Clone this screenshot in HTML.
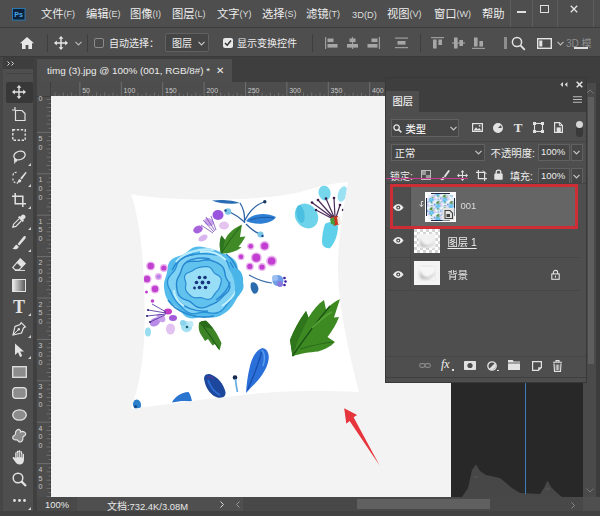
<!DOCTYPE html>
<html><head><meta charset="utf-8">
<style>
*{box-sizing:border-box;margin:0;padding:0}
html,body{width:600px;height:516px;overflow:hidden;background:#4e4e4e}
body{position:relative;font-family:"Liberation Sans","Noto Sans CJK SC",sans-serif;color:#e4e4e4;font-size:12px}
.abs{position:absolute}
svg{position:absolute;overflow:visible}
#menubar{left:0;top:0;width:600px;height:28px;background:#4e4e4e;border-bottom:1px solid #3c3c3c}
#menubar span.m{position:absolute;top:5px;font-size:11.3px;color:#ededed;white-space:nowrap}
#menubar span.m i{font-style:normal;font-size:9px;color:#dcdcdc;position:relative;top:-1px}
#optbar{left:0;top:28px;width:600px;height:29px;background:#4e4e4e;border-bottom:1px solid #3a3a3a}
#optbar .t{position:absolute;font-size:12px;color:#ededed;white-space:nowrap;top:6px}
.vsep{position:absolute;width:1px;background:#3e3e3e;top:6px;height:18px}
#tabbar{left:37px;top:57px;width:563px;height:26px;background:#3e3e3e}
#tab{left:37px;top:59px;width:195px;height:24px;background:#4e4e4e;color:#ececec;font-size:9.9px;line-height:24px;padding-left:10px;white-space:nowrap}
#toolbar{left:0;top:57px;width:37px;height:459px;background:#4e4e4e;border-right:4px solid #404040;border-left:3px solid #464646}
#tbhead{left:3px;top:57px;width:30px;height:12px;background:#3e3e3e}
#hruler{left:37px;top:83px;width:415px;height:14px;background:#4d4d4d}
#vruler{left:37px;top:96px;width:14px;height:401px;background:#4d4d4d}
.rl{position:absolute;font-size:8.5px;color:#bdbdbd;line-height:8px}
#canvas{left:51px;top:96px;width:400px;height:401px;background:#f3f3f3;overflow:hidden}
#dark{left:451px;top:96px;width:132px;height:401px;background:#282828}
#status{left:37px;top:497px;width:563px;height:19px;background:#4f4f4f}
#status .t{position:absolute;top:1px;font-size:11px;color:#e8e8e8;white-space:nowrap}
#dock{left:583px;top:83px;width:17px;height:414px;background:#4a4a4a}
#panel{left:385px;top:77px;width:202px;height:306px;background:#4e4e4e;border:1px solid #383838}
#panel .t{position:absolute;font-size:12px;color:#ececec;white-space:nowrap}
.dd{position:absolute;background:#464646;border:1px solid #616161}
</style></head><body>
<div id="menubar" class="abs">
<svg style="left:12px;top:7.5px" width="13.5" height="12.5" viewBox="0 0 15 14"><rect x="0.5" y="0.5" width="14" height="13" fill="#0c2238" stroke="#2b7fc0" stroke-width="1"/><text x="2.6" y="10.3" font-family="Liberation Sans,sans-serif" font-weight="bold" font-size="8" fill="#4aa8ee">Ps</text></svg>
<span class="m" style="left:41px">文件<i>(F)</i></span>
<span class="m" style="left:86px">编辑<i>(E)</i></span>
<span class="m" style="left:130px">图像<i>(I)</i></span>
<span class="m" style="left:172px">图层<i>(L)</i></span>
<span class="m" style="left:217px">文字<i>(Y)</i></span>
<span class="m" style="left:262px">选择<i>(S)</i></span>
<span class="m" style="left:306px">滤镜<i>(T)</i></span>
<span class="m" style="left:352px"><i style="font-size:9.3px;top:2.5px">3D(D)</i></span>
<span class="m" style="left:387px">视图<i>(V)</i></span>
<span class="m" style="left:434px">窗口<i>(W)</i></span>
<span class="m" style="left:482px">帮助</span>
<div class="abs" style="left:510px;top:0;width:1px;height:27px;background:#5c5c5c"></div>
<div class="abs" style="left:532px;top:0;width:1px;height:27px;background:#5c5c5c"></div>
<div class="abs" style="left:557px;top:0;width:1px;height:27px;background:#5c5c5c"></div>
<div class="abs" style="left:593px;top:0;width:1px;height:27px;background:#5c5c5c"></div>
<div class="abs" style="left:516.5px;top:10.5px;width:9px;height:2px;background:#e0e0e0"></div>
<div class="abs" style="left:540px;top:5px;width:9px;height:8px;border:1.5px solid #e0e0e0"></div>
<svg style="left:570px;top:4.5px" width="8" height="8" viewBox="0 0 10 10"><path d="M1 1L9 9M9 1L1 9" stroke="#e6e6e6" stroke-width="1.6" fill="none"/></svg>

</div>
<div id="optbar" class="abs">
<svg style="left:20px;top:9px" width="14" height="12" viewBox="0 0 14 12"><path d="M7 0L0 6.2H2V12H5.6V8H8.4V12H12V6.2H14Z" fill="#e8e8e8"/></svg>
<div class="vsep" style="left:47px"></div>
<svg style="left:54px;top:8px" width="14" height="14" viewBox="0 0 14 14"><path d="M7 0L4.6 2.8H6.3V6.3H2.8V4.6L0 7L2.8 9.4V7.7H6.3V11.2H4.6L7 14L9.4 11.2H7.7V7.7H11.2V9.4L14 7L11.2 4.6V6.3H7.7V2.8H9.4Z" fill="#e8e8e8"/></svg>
<svg style="left:75px;top:13px" width="7" height="5" viewBox="0 0 7 5"><path d="M0.5 0.8L3.5 3.8L6.5 0.8" stroke="#b8b8b8" stroke-width="1.2" fill="none"/></svg>
<div class="vsep" style="left:87px"></div>
<div class="abs" style="left:94px;top:10px;width:10px;height:10px;border:1px solid #8a8a8a;border-radius:2px;background:#4a4a4a"></div>
<span class="t" style="left:109px;font-size:10px;top:7px">自动选择：</span>
<div class="abs" style="left:165px;top:5px;width:44px;height:19px;background:#454545;border:1px solid #616161;border-radius:2px"></div>
<span class="t" style="left:172px;font-size:10px;top:7px">图层</span>
<svg style="left:198px;top:13px" width="7" height="5" viewBox="0 0 7 5"><path d="M0.5 0.8L3.5 3.8L6.5 0.8" stroke="#c8c8c8" stroke-width="1.2" fill="none"/></svg>
<div class="abs" style="left:223px;top:10px;width:10px;height:10px;border-radius:2px;background:#e8e8e8"></div>
<svg style="left:224px;top:11px" width="8" height="8" viewBox="0 0 8 8"><path d="M1 4L3.2 6.2L7 1.5" stroke="#333" stroke-width="1.5" fill="none"/></svg>
<span class="t" style="left:237px;font-size:10px;top:7px">显示变换控件</span>
<div class="vsep" style="left:312px"></div>
<g>
<svg style="left:325px;top:9px" width="13" height="12" viewBox="0 0 13 12"><rect x="0" y="0" width="1.2" height="12" fill="#9c9c9c"/><rect x="2.5" y="1.5" width="6" height="3.6" fill="#a6a6a6"/><rect x="2.5" y="7" width="10" height="3.6" fill="#a6a6a6"/></svg>
<svg style="left:346px;top:9px" width="13" height="12" viewBox="0 0 13 12"><rect x="5.9" y="0" width="1.2" height="12" fill="#9c9c9c"/><rect x="3.5" y="1.5" width="6" height="3.6" fill="#a6a6a6"/><rect x="1" y="7" width="11" height="3.6" fill="#a6a6a6"/></svg>
<svg style="left:367px;top:9px" width="13" height="12" viewBox="0 0 13 12"><rect x="11.8" y="0" width="1.2" height="12" fill="#9c9c9c"/><rect x="4.5" y="1.5" width="6" height="3.6" fill="#a6a6a6"/><rect x="0.5" y="7" width="10" height="3.6" fill="#a6a6a6"/></svg>
<svg style="left:395px;top:9px" width="13" height="12" viewBox="0 0 13 12"><rect x="0" y="0.5" width="13" height="1.2" fill="#9c9c9c"/><rect x="2.5" y="4" width="8" height="3.6" fill="#a6a6a6"/><rect x="0" y="10" width="13" height="1.2" fill="#9c9c9c"/></svg>
<div class="vsep" style="left:420px"></div>
<svg style="left:431px;top:9px" width="13" height="12" viewBox="0 0 13 12"><rect x="0" y="0" width="13" height="1.2" fill="#9c9c9c"/><rect x="2" y="2.5" width="3.6" height="9" fill="#a6a6a6"/><rect x="7.4" y="2.5" width="3.6" height="5.5" fill="#a6a6a6"/></svg>
<svg style="left:452px;top:9px" width="13" height="12" viewBox="0 0 13 12"><rect x="0" y="5.4" width="13" height="1.2" fill="#9c9c9c"/><rect x="2" y="0.5" width="3.6" height="11" fill="#a6a6a6"/><rect x="7.4" y="3" width="3.6" height="6" fill="#a6a6a6"/></svg>
<svg style="left:472px;top:9px" width="13" height="12" viewBox="0 0 13 12"><rect x="0" y="10.8" width="13" height="1.2" fill="#9c9c9c"/><rect x="2" y="0.5" width="3.6" height="9" fill="#a6a6a6"/><rect x="7.4" y="4" width="3.6" height="5.5" fill="#a6a6a6"/></svg>
</g>
<div class="abs" style="left:504px;top:9px;width:3px;height:12px;background:#8d8d8d"></div>
<svg style="left:511px;top:8px" width="15" height="15" viewBox="0 0 15 15"><circle cx="6" cy="6" r="4.6" stroke="#e4e4e4" stroke-width="1.5" fill="none"/><path d="M9.4 9.4L13.8 13.8" stroke="#e4e4e4" stroke-width="1.9"/></svg>
<svg style="left:537px;top:10px" width="15" height="11" viewBox="0 0 15 11"><rect x="0.7" y="0.7" width="13.6" height="9.6" stroke="#e4e4e4" stroke-width="1.4" fill="none"/><rect x="2.3" y="2.5" width="3" height="6" fill="#e4e4e4"/></svg>
<svg style="left:557px;top:13px" width="7" height="5" viewBox="0 0 7 5"><path d="M0.5 0.8L3.5 3.8L6.5 0.8" stroke="#b8b8b8" stroke-width="1.2" fill="none"/></svg>
<span class="t" style="left:566px;top:7px;font-size:10px;color:#8c8c8c">3D 模</span>
<div class="abs" style="left:574px;top:19px;width:14px;height:2px;background:#e0e0e0"></div>

</div>
<div id="tabbar" class="abs"></div>
<div id="tab" class="abs">timg (3).jpg @ 100% (001, RGB/8#) * <span style="margin-left:3px;font-size:10px">✕</span></div>
<div id="toolbar" class="abs"></div>
<div id="tbhead" class="abs"></div>
<div class="abs" style="left:6px;top:82px;width:27px;height:21px;background:#383838;border-radius:2px"></div>
<svg style="left:7px;top:61px" width="8" height="5" viewBox="0 0 8 5"><path d="M0.5 0.5L2.5 2.5L0.5 4.5M4.5 0.5L6.5 2.5L4.5 4.5" stroke="#ddd" stroke-width="1" fill="none"/></svg>
<div class="abs" style="left:6px;top:73px;width:27px;height:1px;background:#444"></div>
<svg style="left:12.0px;top:85.0px" width="14" height="14" viewBox="0 0 14 14"><path d="M7 0L4.6 2.8H6.3V6.3H2.8V4.6L0 7L2.8 9.4V7.7H6.3V11.2H4.6L7 14L9.4 11.2H7.7V7.7H11.2V9.4L14 7L11.2 4.6V6.3H7.7V2.8H9.4Z" fill="#e2e2e2"/></svg>
<svg style="left:12.0px;top:106.5px" width="14" height="14" viewBox="0 0 14 14"><path d="M3 0V3H0M3.5 3.5H10L13 6.5V13.5H3.5Z" stroke="#e2e2e2" stroke-width="1.2" fill="none"/></svg>
<svg style="left:12.0px;top:129.0px" width="14" height="12" viewBox="0 0 14 12"><rect x="0.8" y="0.8" width="12.4" height="10.4" stroke="#e2e2e2" stroke-width="1.4" fill="none" stroke-dasharray="2.4 1.6"/></svg>
<svg style="left:12.0px;top:149.5px" width="14" height="14" viewBox="0 0 14 14"><ellipse cx="7.5" cy="5.5" rx="5.8" ry="4.2" transform="rotate(-18 7.5 5.5)" stroke="#e2e2e2" stroke-width="1.3" fill="none"/><path d="M3.5 8.5C2 9.5 2 11.5 3.8 11.5C5 11.5 4.8 9.8 3.6 9.9C2.5 10.5 2.5 12.5 3 13.5" stroke="#e2e2e2" stroke-width="1.1" fill="none"/></svg>
<svg style="left:11.5px;top:171.0px" width="15" height="14" viewBox="0 0 15 14"><path d="M1 4.5C1 2 3 1 5 1.5M1 7.5C0.5 10.5 3 12.5 6 12" stroke="#e2e2e2" stroke-width="1.2" fill="none" stroke-dasharray="2 1.3"/><path d="M13.8 0.8L8.2 7.2L9.8 8.6L14.6 1.8Z" fill="#e2e2e2"/><path d="M7.6 7.9C5.8 8.6 6.4 10.6 4.8 11.6C7 12 9.4 11 9.4 9.4Z" fill="#e2e2e2"/></svg>
<svg style="left:12.0px;top:192.5px" width="14" height="14" viewBox="0 0 14 14"><path d="M3.2 0V10.8H14M0 3.2H10.8V14" stroke="#e2e2e2" stroke-width="1.5" fill="none"/></svg>
<svg style="left:12.0px;top:214.0px" width="14" height="14" viewBox="0 0 14 14"><path d="M12.8 1.2C11.6 0 10.2 0.4 9.4 1.4L8.2 2.8L7.2 2L6 3.4L10.6 8L12 6.8L11.2 5.8L12.6 4.6C13.6 3.8 14 2.4 12.8 1.2Z" fill="#e2e2e2"/><path d="M7 4.8L1.6 10.2L0.8 13.2L3.8 12.4L9.2 7" stroke="#e2e2e2" stroke-width="1.2" fill="none"/></svg>
<svg style="left:12.0px;top:235.5px" width="14" height="14" viewBox="0 0 14 14"><path d="M13.4 0.3C12.6 -0.2 11.8 0.2 11.2 1L5.6 8L7.4 9.6L13.4 2.4C14 1.6 14 0.8 13.4 0.3Z" fill="#e2e2e2"/><path d="M4.8 8.8C2.6 9 2.8 11.4 0.4 12.8C3.4 14 6.8 12.6 6.6 10.4Z" fill="#e2e2e2"/></svg>
<svg style="left:12.0px;top:257.5px" width="14" height="13" viewBox="0 0 14 13"><path d="M8.2 0.8L13.2 5.4L7 11.8H3.2L0.8 9.4Z" stroke="#e2e2e2" stroke-width="1.2" fill="none"/><path d="M8.2 0.8L13.2 5.4L9.4 9.3L4.5 4.6Z" fill="#e2e2e2"/><path d="M3 12.4H13" stroke="#e2e2e2" stroke-width="1"/></svg>
<svg style="left:12px;top:279.0px" width="14" height="13" viewBox="0 0 14 13"><defs><linearGradient id="gr" x1="0" x2="1"><stop offset="0" stop-color="#efefef"/><stop offset="1" stop-color="#555"/></linearGradient></defs><rect x="0.5" y="0.5" width="13" height="12" fill="url(#gr)" stroke="#e2e2e2" stroke-width="1"/></svg>
<div class="abs" style="left:11px;top:297.0px;width:16px;height:20px;font-family:'Liberation Serif',serif;font-weight:bold;font-size:18px;line-height:20px;text-align:center;color:#e2e2e2">T</div>
<svg style="left:12.0px;top:321.5px" width="14" height="14" viewBox="0 0 14 14"><path d="M9.2 0.6L13.4 4.8L11.4 6L9.6 11L1 13L3 4.4L8 2.6Z" stroke="#e2e2e2" stroke-width="1.2" fill="none"/><path d="M1.2 12.8L6.2 7.8" stroke="#e2e2e2" stroke-width="1"/><circle cx="6.8" cy="7.2" r="1.2" fill="#e2e2e2"/></svg>
<svg style="left:13.5px;top:342.5px" width="11" height="15" viewBox="0 0 11 15"><path d="M1 0.5V12L4 9.2L6 14L8.2 13L6.2 8.4H10Z" fill="#e2e2e2"/></svg>
<svg style="left:11.5px;top:365.5px" width="15" height="12" viewBox="0 0 15 12"><rect x="0.7" y="0.7" width="13.6" height="10.6" fill="#8c8c8c" stroke="#e2e2e2" stroke-width="1.3"/></svg>
<svg style="left:11.5px;top:387.0px" width="15" height="12" viewBox="0 0 15 12"><rect x="0.7" y="0.7" width="13.6" height="10.6" rx="3" fill="#8c8c8c" stroke="#e2e2e2" stroke-width="1.3"/></svg>
<svg style="left:11.5px;top:408.5px" width="15" height="12" viewBox="0 0 15 12"><ellipse cx="7.5" cy="6" rx="6.8" ry="5.2" fill="#8c8c8c" stroke="#e2e2e2" stroke-width="1.3"/></svg>
<svg style="left:11.5px;top:429.0px" width="15" height="14" viewBox="0 0 15 14"><path d="M5 1C7 -0.5 9 1 8.6 3C11 1.6 14.4 3.4 13.6 5.6C13 7.4 10.6 7 10.8 8.6C11.4 11 9.6 13.4 7.4 12.8C5.8 12.4 6 10.6 4.6 10.8C2.4 11.4 0.4 10 0.8 8C1.2 6.4 3.4 6.6 3.4 5C3.2 3.4 3.6 2 5 1Z" fill="#8c8c8c" stroke="#e2e2e2" stroke-width="1.2"/></svg>
<svg style="left:12.0px;top:450.0px" width="14" height="15" viewBox="0 0 14 15"><path d="M3.2 8V3.2C3.2 2 4.8 2 4.8 3.2V1.8C4.8 0.4 6.6 0.4 6.6 1.8V1.2C6.6 0 8.4 0 8.4 1.4V2.2C8.4 1 10.2 1 10.2 2.4V4.4C10.2 3.4 12 3.4 12 4.6V9.6C12 12.6 10.4 14.6 7.6 14.6C5.4 14.6 4.4 13.6 3 11.6L0.8 8.4C0.2 7.2 1.6 6.4 2.4 7.4Z" fill="#e2e2e2"/><path d="M4.9 3V7.5M6.7 2V7.2M8.5 2.2V7.2M10.2 4V7.6" stroke="#4e4e4e" stroke-width="0.7"/></svg>
<svg style="left:11.5px;top:471.5px" width="15" height="15" viewBox="0 0 15 15"><circle cx="6" cy="6" r="4.8" stroke="#e2e2e2" stroke-width="1.5" fill="none"/><path d="M9.4 9.4L14 14" stroke="#e2e2e2" stroke-width="2.2"/></svg>
<svg style="left:12.5px;top:499.0px" width="13" height="3" viewBox="0 0 13 3"><circle cx="1.5" cy="1.5" r="1.4" fill="#e2e2e2"/><circle cx="6.5" cy="1.5" r="1.4" fill="#e2e2e2"/><circle cx="11.5" cy="1.5" r="1.4" fill="#e2e2e2"/></svg>
<svg style="left:28px;top:162.5px" width="3" height="3" viewBox="0 0 3 3"><path d="M3 0V3H0Z" fill="#cfcfcf"/></svg>
<svg style="left:28px;top:184.0px" width="3" height="3" viewBox="0 0 3 3"><path d="M3 0V3H0Z" fill="#cfcfcf"/></svg>
<svg style="left:28px;top:205.5px" width="3" height="3" viewBox="0 0 3 3"><path d="M3 0V3H0Z" fill="#cfcfcf"/></svg>
<svg style="left:28px;top:227.0px" width="3" height="3" viewBox="0 0 3 3"><path d="M3 0V3H0Z" fill="#cfcfcf"/></svg>
<svg style="left:28px;top:248.5px" width="3" height="3" viewBox="0 0 3 3"><path d="M3 0V3H0Z" fill="#cfcfcf"/></svg>
<svg style="left:28px;top:313.0px" width="3" height="3" viewBox="0 0 3 3"><path d="M3 0V3H0Z" fill="#cfcfcf"/></svg>
<svg style="left:28px;top:334.5px" width="3" height="3" viewBox="0 0 3 3"><path d="M3 0V3H0Z" fill="#cfcfcf"/></svg>
<svg style="left:28px;top:356.0px" width="3" height="3" viewBox="0 0 3 3"><path d="M3 0V3H0Z" fill="#cfcfcf"/></svg>
<svg style="left:28px;top:506.5px" width="3" height="3" viewBox="0 0 3 3"><path d="M3 0V3H0Z" fill="#cfcfcf"/></svg>

<div id="hruler" class="abs"></div>
<div id="vruler" class="abs"></div>
<svg style="left:37px;top:82px" width="415" height="15" viewBox="37 82 415 15"><rect x="37" y="82" width="415" height="15" fill="#4d4d4d"/><path d="M37 96.500H452" stroke="#3e3e3e" stroke-width="1"/><path d="M50.500 82V97" stroke="#3e3e3e" stroke-width="1"/><path d="M55.1 92.500V97M59.2 94.500V97M63.3 92.500V97M67.5 94.500V97M71.6 92.500V97M75.8 94.500V97M79.9 82V97M84.0 94.500V97M88.2 92.500V97M92.3 94.500V97M96.5 92.500V97M100.6 94.500V97M104.7 92.500V97M108.9 94.500V97M113.0 92.500V97M117.2 94.500V97M121.3 82V97M125.4 94.500V97M129.6 92.500V97M133.7 94.500V97M137.9 92.500V97M142.0 94.500V97M146.1 92.500V97M150.3 94.500V97M154.4 92.500V97M158.6 94.500V97M162.7 82V97M166.8 94.500V97M171.0 92.500V97M175.1 94.500V97M179.3 92.500V97M183.4 94.500V97M187.5 92.500V97M191.7 94.500V97M195.8 92.500V97M200.0 94.500V97M204.1 82V97M208.2 94.500V97M212.4 92.500V97M216.5 94.500V97M220.7 92.500V97M224.8 94.500V97M228.9 92.500V97M233.1 94.500V97M237.2 92.500V97M241.4 94.500V97M245.5 82V97M249.6 94.500V97M253.8 92.500V97M257.9 94.500V97M262.1 92.500V97M266.2 94.500V97M270.3 92.500V97M274.5 94.500V97M278.6 92.500V97M282.8 94.500V97M286.9 82V97M291.0 94.500V97M295.2 92.500V97M299.3 94.500V97M303.5 92.500V97M307.6 94.500V97M311.7 92.500V97M315.9 94.500V97M320.0 92.500V97M324.2 94.500V97M328.3 82V97M332.4 94.500V97M336.6 92.500V97M340.7 94.500V97M344.9 92.500V97M349.0 94.500V97M353.1 92.500V97M357.3 94.500V97M361.4 92.500V97M365.6 94.500V97M369.7 82V97M373.8 94.500V97M378.0 92.500V97M382.1 94.500V97M386.3 92.500V97M390.4 94.500V97M394.5 92.500V97M398.7 94.500V97M402.8 92.500V97M407.0 94.500V97M411.1 82V97M415.2 94.500V97M419.4 92.500V97M423.5 94.500V97M427.7 92.500V97M431.8 94.500V97M435.9 92.500V97M440.1 94.500V97M444.2 92.500V97M448.4 94.500V97" stroke="#777" stroke-width="0.8" fill="none"/><text x="82.2" y="92.800" font-size="7" fill="#c8c8c8" font-family="Liberation Sans,sans-serif">50</text><text x="123.6" y="92.800" font-size="7" fill="#c8c8c8" font-family="Liberation Sans,sans-serif">100</text><text x="165.0" y="92.800" font-size="7" fill="#c8c8c8" font-family="Liberation Sans,sans-serif">150</text><text x="206.4" y="92.800" font-size="7" fill="#c8c8c8" font-family="Liberation Sans,sans-serif">200</text><text x="247.8" y="92.800" font-size="7" fill="#c8c8c8" font-family="Liberation Sans,sans-serif">250</text><text x="289.2" y="92.800" font-size="7" fill="#c8c8c8" font-family="Liberation Sans,sans-serif">300</text><text x="330.6" y="92.800" font-size="7" fill="#c8c8c8" font-family="Liberation Sans,sans-serif">350</text><text x="372.0" y="92.800" font-size="7" fill="#c8c8c8" font-family="Liberation Sans,sans-serif">400</text><text x="413.4" y="92.800" font-size="7" fill="#c8c8c8" font-family="Liberation Sans,sans-serif">450</text></svg>
<svg style="left:37px;top:97px" width="14" height="400" viewBox="37 97 14 400"><path d="M50.500 97V497" stroke="#3e3e3e" stroke-width="1"/><path d="M46.500 99.3H51M48.500 103.4H51M46.500 107.6H51M48.500 111.7H51M46.500 115.8H51M48.500 120.0H51M46.500 124.1H51M48.500 128.3H51M37 132.4H51M48.500 136.5H51M46.500 140.7H51M48.500 144.8H51M46.500 149.0H51M48.500 153.1H51M46.500 157.2H51M48.500 161.4H51M46.500 165.5H51M48.500 169.7H51M37 173.8H51M48.500 177.9H51M46.500 182.1H51M48.500 186.2H51M46.500 190.4H51M48.500 194.5H51M46.500 198.6H51M48.500 202.8H51M46.500 206.9H51M48.500 211.1H51M37 215.2H51M48.500 219.3H51M46.500 223.5H51M48.500 227.6H51M46.500 231.8H51M48.500 235.9H51M46.500 240.0H51M48.500 244.2H51M46.500 248.3H51M48.500 252.5H51M37 256.6H51M48.500 260.7H51M46.500 264.9H51M48.500 269.0H51M46.500 273.2H51M48.500 277.3H51M46.500 281.4H51M48.500 285.6H51M46.500 289.7H51M48.500 293.9H51M37 298.0H51M48.500 302.1H51M46.500 306.3H51M48.500 310.4H51M46.500 314.6H51M48.500 318.7H51M46.500 322.8H51M48.500 327.0H51M46.500 331.1H51M48.500 335.3H51M37 339.4H51M48.500 343.5H51M46.500 347.7H51M48.500 351.8H51M46.500 356.0H51M48.500 360.1H51M46.500 364.2H51M48.500 368.4H51M46.500 372.5H51M48.500 376.7H51M37 380.8H51M48.500 384.9H51M46.500 389.1H51M48.500 393.2H51M46.500 397.4H51M48.500 401.5H51M46.500 405.6H51M48.500 409.8H51M46.500 413.9H51M48.500 418.1H51M37 422.2H51M48.500 426.3H51M46.500 430.5H51M48.500 434.6H51M46.500 438.8H51M48.500 442.9H51M46.500 447.0H51M48.500 451.2H51M46.500 455.3H51M48.500 459.5H51M37 463.6H51M48.500 467.7H51M46.500 471.9H51M48.500 476.0H51M46.500 480.2H51M48.500 484.3H51M46.500 488.4H51M48.500 492.6H51M46.500 496.7H51" stroke="#777" stroke-width="0.8" fill="none"/><text x="38.500" y="101.0" font-size="7" fill="#c8c8c8" font-family="Liberation Sans,sans-serif">0</text><text x="38.500" y="140.9" font-size="7" fill="#c8c8c8" font-family="Liberation Sans,sans-serif">5</text><text x="38.500" y="149.5" font-size="7" fill="#c8c8c8" font-family="Liberation Sans,sans-serif">0</text><text x="38.500" y="182.3" font-size="7" fill="#c8c8c8" font-family="Liberation Sans,sans-serif">1</text><text x="38.500" y="190.9" font-size="7" fill="#c8c8c8" font-family="Liberation Sans,sans-serif">0</text><text x="38.500" y="199.5" font-size="7" fill="#c8c8c8" font-family="Liberation Sans,sans-serif">0</text><text x="38.500" y="223.7" font-size="7" fill="#c8c8c8" font-family="Liberation Sans,sans-serif">1</text><text x="38.500" y="232.3" font-size="7" fill="#c8c8c8" font-family="Liberation Sans,sans-serif">5</text><text x="38.500" y="240.9" font-size="7" fill="#c8c8c8" font-family="Liberation Sans,sans-serif">0</text><text x="38.500" y="265.1" font-size="7" fill="#c8c8c8" font-family="Liberation Sans,sans-serif">2</text><text x="38.500" y="273.7" font-size="7" fill="#c8c8c8" font-family="Liberation Sans,sans-serif">0</text><text x="38.500" y="282.3" font-size="7" fill="#c8c8c8" font-family="Liberation Sans,sans-serif">0</text><text x="38.500" y="306.5" font-size="7" fill="#c8c8c8" font-family="Liberation Sans,sans-serif">2</text><text x="38.500" y="315.1" font-size="7" fill="#c8c8c8" font-family="Liberation Sans,sans-serif">5</text><text x="38.500" y="323.7" font-size="7" fill="#c8c8c8" font-family="Liberation Sans,sans-serif">0</text><text x="38.500" y="347.9" font-size="7" fill="#c8c8c8" font-family="Liberation Sans,sans-serif">3</text><text x="38.500" y="356.5" font-size="7" fill="#c8c8c8" font-family="Liberation Sans,sans-serif">0</text><text x="38.500" y="365.1" font-size="7" fill="#c8c8c8" font-family="Liberation Sans,sans-serif">0</text><text x="38.500" y="389.3" font-size="7" fill="#c8c8c8" font-family="Liberation Sans,sans-serif">3</text><text x="38.500" y="397.9" font-size="7" fill="#c8c8c8" font-family="Liberation Sans,sans-serif">5</text><text x="38.500" y="406.5" font-size="7" fill="#c8c8c8" font-family="Liberation Sans,sans-serif">0</text><text x="38.500" y="430.7" font-size="7" fill="#c8c8c8" font-family="Liberation Sans,sans-serif">4</text><text x="38.500" y="439.3" font-size="7" fill="#c8c8c8" font-family="Liberation Sans,sans-serif">0</text><text x="38.500" y="447.9" font-size="7" fill="#c8c8c8" font-family="Liberation Sans,sans-serif">0</text><text x="38.500" y="472.1" font-size="7" fill="#c8c8c8" font-family="Liberation Sans,sans-serif">4</text><text x="38.500" y="480.7" font-size="7" fill="#c8c8c8" font-family="Liberation Sans,sans-serif">5</text><text x="38.500" y="489.3" font-size="7" fill="#c8c8c8" font-family="Liberation Sans,sans-serif">0</text></svg>
<div id="canvas" class="abs">
<svg style="left:0;top:0" width="401" height="401" viewBox="51 96 401 401">
<defs>
<filter id="sf" x="-10%" y="-10%" width="120%" height="120%"><feGaussianBlur stdDeviation="0.7"/></filter>
<filter id="sf2" x="-20%" y="-20%" width="140%" height="140%"><feGaussianBlur stdDeviation="1.6"/></filter>
<clipPath id="pc"><path id="pillowp" d="M131 194C150 198 180 199.500 212 199.500C245 199.500 285 197 305 190.500C320 186 335 183 348 182C342 215 336 250 338.500 284C340 310 348 350 359 392C330 390.500 300 391 286 391.500C250 393 190 401 131 409C142 380 146 340 144.500 300C144 260 140 220 131 194Z"/></clipPath>
</defs>
<path d="M131 194C150 198 180 199.500 212 199.500C245 199.500 285 197 305 190.500C320 186 335 183 348 182C342 215 336 250 338.500 284C340 310 348 350 359 392C330 390.500 300 391 286 391.500C250 393 190 401 131 409C142 380 146 340 144.500 300C144 260 140 220 131 194Z" fill="#ffffff"/>
<g clip-path="url(#pc)" filter="url(#sf)">
<g id="floral">
<!-- big blue flower -->
<path d="M243.2 283.0 L243.7 286.2 L243.0 289.4 L241.3 292.3 L239.3 295.0 L237.4 297.6 L235.7 300.2 L234.2 302.9 L232.6 305.6 L230.6 308.1 L228.2 310.4 L225.6 312.4 L222.9 314.3 L219.9 316.0 L216.7 317.1 L213.2 317.6 L209.7 317.5 L206.3 317.1 L203.0 316.9 L199.7 317.2 L196.2 317.9 L192.6 318.4 L189.0 318.1 L185.8 316.7 L183.1 314.3 L181.0 311.6 L178.9 309.1 L176.6 307.0 L174.0 305.2 L171.2 303.3 L168.7 301.0 L166.8 298.4 L165.5 295.4 L164.7 292.3 L164.2 289.2 L163.9 286.1 L164.1 283.0 L164.7 280.0 L165.7 277.0 L166.6 274.1 L167.2 271.1 L167.6 268.0 L168.2 264.7 L169.5 261.7 L171.8 259.2 L174.9 257.4 L178.3 256.3 L181.6 255.2 L184.5 253.8 L187.1 251.9 L189.7 249.7 L192.6 247.8 L196.0 246.7 L199.5 246.5 L203.0 246.9 L206.4 247.7 L209.7 248.5 L212.9 249.3 L216.1 250.2 L219.2 251.4 L222.2 252.8 L225.1 254.2 L228.2 255.7 L231.2 257.3 L234.0 259.3 L236.1 261.9 L237.3 265.0 L237.8 268.2 L238.1 271.4 L238.7 274.3 L240.1 277.1 L241.8 279.9Z" fill="#55bcec" stroke-linejoin="round"/>
<path d="M238.2 283.5 L237.4 286.2 L236.4 288.8 L235.3 291.3 L234.3 293.7 L233.2 296.1 L231.8 298.4 L230.2 300.6 L228.5 302.7 L226.7 304.8 L225.0 307.0 L223.0 309.2 L220.8 311.1 L218.1 312.5 L215.0 313.2 L211.8 313.1 L208.7 312.7 L205.8 312.2 L203.0 312.2 L200.2 312.6 L197.2 313.2 L194.0 313.6 L190.9 313.4 L188.0 312.4 L185.4 310.8 L183.2 308.8 L181.2 306.8 L179.3 304.7 L177.5 302.7 L175.7 300.7 L174.2 298.4 L172.9 296.1 L171.7 293.7 L170.6 291.3 L169.4 288.8 L168.2 286.2 L167.5 283.5 L167.5 280.7 L168.4 278.0 L170.0 275.6 L172.0 273.4 L173.9 271.3 L175.3 269.1 L176.3 266.7 L177.2 264.1 L178.4 261.4 L180.2 259.1 L182.6 257.3 L185.4 256.2 L188.4 255.5 L191.4 255.0 L194.3 254.5 L197.2 254.0 L200.1 253.7 L203.0 253.6 L205.9 253.8 L208.8 254.1 L211.7 254.4 L214.7 254.7 L217.8 255.1 L220.8 255.9 L223.5 257.3 L225.6 259.3 L227.2 261.8 L228.3 264.5 L229.3 267.0 L230.7 269.1 L232.5 271.1 L234.6 273.2 L236.6 275.4 L237.9 278.0 L238.5 280.7Z" fill="#7fd2f4" stroke="#2c92d8" stroke-width="1.400" stroke-linejoin="round"/>
<path d="M229.0 283.0 L229.7 285.2 L229.9 287.4 L229.2 289.5 L228.0 291.4 L226.5 293.1 L224.8 294.6 L223.2 296.1 L221.8 297.6 L220.3 299.1 L218.8 300.5 L217.1 301.8 L215.2 302.9 L213.3 303.8 L211.3 304.7 L209.2 305.6 L207.1 306.6 L204.9 307.4 L202.5 307.9 L200.1 307.9 L197.8 307.3 L195.6 306.1 L193.8 304.7 L192.1 303.2 L190.4 301.9 L188.6 300.9 L186.6 300.1 L184.4 299.3 L182.3 298.3 L180.4 297.0 L178.9 295.3 L177.9 293.4 L177.3 291.3 L176.9 289.2 L176.6 287.1 L176.5 285.1 L176.5 283.0 L176.8 281.0 L177.4 279.0 L178.3 277.1 L179.2 275.3 L180.1 273.6 L180.9 271.7 L181.5 269.7 L182.2 267.6 L183.2 265.5 L184.6 263.7 L186.5 262.4 L188.8 261.6 L191.3 261.3 L193.8 261.3 L196.1 261.4 L198.3 261.2 L200.4 260.9 L202.5 260.4 L204.7 260.0 L207.0 259.8 L209.3 260.0 L211.5 260.5 L213.7 261.3 L215.8 262.2 L217.8 263.2 L219.8 264.4 L221.6 265.8 L223.0 267.4 L224.0 269.4 L224.6 271.5 L225.0 273.5 L225.3 275.5 L225.9 277.3 L226.8 279.1 L227.9 281.0Z" fill="#62c2ee" stroke="#2786cf" stroke-width="1.400" stroke-linejoin="round"/>
<path d="M220.9 283.0 L220.5 284.4 L220.1 285.8 L219.6 287.1 L219.1 288.4 L218.4 289.6 L217.5 290.7 L216.5 291.7 L215.6 292.8 L214.7 293.9 L213.9 295.1 L213.1 296.4 L212.1 297.7 L210.7 298.7 L209.2 299.3 L207.4 299.4 L205.7 299.0 L204.0 298.5 L202.5 298.0 L201.1 297.7 L199.6 297.6 L198.1 297.7 L196.5 297.8 L194.8 297.7 L193.2 297.3 L191.8 296.6 L190.5 295.7 L189.4 294.7 L188.3 293.6 L187.3 292.5 L186.4 291.2 L185.8 289.9 L185.5 288.5 L185.5 287.0 L185.7 285.6 L185.9 284.3 L185.9 283.0 L185.6 281.7 L185.1 280.3 L184.6 278.7 L184.5 277.2 L184.8 275.7 L185.6 274.3 L186.9 273.3 L188.5 272.5 L190.0 271.9 L191.4 271.3 L192.7 270.6 L193.9 269.8 L195.2 269.0 L196.5 268.3 L197.9 267.8 L199.4 267.4 L200.9 267.1 L202.5 266.9 L204.1 266.7 L205.8 266.5 L207.4 266.6 L209.1 267.0 L210.5 267.8 L211.6 268.9 L212.5 270.2 L213.3 271.5 L214.1 272.7 L215.1 273.6 L216.4 274.4 L217.8 275.1 L219.2 276.1 L220.4 277.2 L221.1 278.6 L221.3 280.0 L221.2 281.5Z" fill="#98def6" stroke="#2a8cd2" stroke-width="1.200" stroke-linejoin="round"/>
<path d="M168 300C176 312 196 320 214 316M226 254C236 262 242 276 238 292" stroke="#2a8ad0" stroke-width="1.6" fill="none"/>
<path d="M176 262C184 252 200 248 214 250" stroke="#b8ecfa" stroke-width="2.2" fill="none"/>
<path d="M172 270C176 262 184 256 194 254M178 300C184 308 196 312 208 311M230 262C236 270 238 280 236 290M186 262C192 258 202 257 210 259M216 300C222 296 228 290 230 282" stroke="#2a8ad4" stroke-width="1.500" fill="none"/>
<path d="M174 290C174 296 178 302 184 306M200 252C210 250 220 254 226 260M222 306C228 302 234 296 236 290" stroke="#c4f0fc" stroke-width="2" fill="none"/>
<path d="M228 268C236 266 242 270 243 278C244 288 240 296 234 300C236 290 236 278 228 268Z" fill="#4ab4e8"/>
<g fill="#18357c"><circle cx="199.500" cy="277.500" r="1.800"/><circle cx="205" cy="277.500" r="1.800"/><circle cx="196.500" cy="282.500" r="1.800"/><circle cx="202.500" cy="282.500" r="1.900"/><circle cx="208.500" cy="282.500" r="1.800"/><circle cx="199.500" cy="287.500" r="1.800"/><circle cx="205.500" cy="287.500" r="1.800"/><circle cx="194.500" cy="288" r="1.400"/></g>
<!-- top blue sprig -->
<path d="M212 200.500C222 199 234 200.500 240 203C232 204.500 220 204 212 200.500Z" fill="#2a6cb4"/>
<path d="M240 203C244 209 245 216 244.500 223M244.500 222C238 216 232 213 229 211.500M245 220C250 210 258 204 264 202M246 224C252 230 257 233 260 234" stroke="#2d62a4" stroke-width="1.300" fill="none"/>
<path d="M246 221C252 213 266 212 276 217C272 224 256 226 246 221Z" fill="#2e7fd4"/>
<path d="M250 220C258 217 268 217 274 218" stroke="#1c58a8" stroke-width="1" fill="none"/>
<circle cx="228" cy="211.500" r="3.200" fill="#7cc6e8"/><circle cx="225.500" cy="210.500" r="1.200" fill="#1e4a88"/>
<circle cx="264.800" cy="201.800" r="1.700" fill="#17375f"/>
<circle cx="260.500" cy="234.500" r="3" fill="#7cc6e8"/><circle cx="262.500" cy="236" r="1.200" fill="#1e4a88"/>
<!-- purple flower top -->
<ellipse cx="218" cy="215" rx="5.500" ry="5" fill="#9a52dc"/>
<ellipse cx="198" cy="229.500" rx="5" ry="3.600" fill="#a664dc" transform="rotate(-25 198 229.500)"/>
<ellipse cx="203" cy="238" rx="5" ry="3" fill="#d9b6ee" transform="rotate(-30 203 238)"/>
<ellipse cx="224" cy="225.500" rx="5" ry="4" fill="#e6c4f0"/>
<ellipse cx="209" cy="222" rx="5" ry="3.500" fill="#c9a0ea" transform="rotate(30 209 222)"/>
<path d="M214 232L203 220M215 231L206 217M213 233L201 225M216 230L211 216" stroke="#7a4ab4" stroke-width="0.800" fill="none"/>
<!-- green leaf top -->
<path d="M221 253.500C219 246 219.500 240 221.500 235.500L225 240C228 233 234 228 242 224.500C241 230 240.500 234 240 237L245.500 236.500C243 241 241 244 238.500 246.500L241.500 247.500C235 252 228 254 221 253.500Z" fill="#3f8b28"/>
<path d="M221.500 253C227 244 234 234 241 226" stroke="#23601a" stroke-width="1" fill="none"/>
<path d="M221 253.500C219 246 219.500 240 221.500 235.500L225 240L223 250Z" fill="#2f7420"/>
<!-- magenta berries right -->
<g fill="#eab4ee"><circle cx="250.700" cy="246.300" r="3.600"/><circle cx="264.600" cy="246" r="5"/><circle cx="241" cy="256.800" r="3.500"/><circle cx="256.300" cy="257.700" r="5.500"/><circle cx="271.600" cy="261" r="5.500"/><circle cx="249.800" cy="266.400" r="4"/><circle cx="262" cy="267" r="4"/></g>
<g fill="#c23ed2"><circle cx="250.700" cy="246.300" r="2.300"/><circle cx="264.600" cy="246" r="3.500"/><circle cx="241" cy="256.800" r="2.200"/><circle cx="256.300" cy="257.700" r="4"/><circle cx="271.600" cy="261" r="3.800"/><circle cx="249.800" cy="266.400" r="2.600"/><circle cx="262" cy="267" r="2.600"/></g>
<!-- magenta berries left -->
<g fill="#eab4ee"><circle cx="150.700" cy="266" r="4.600"/><circle cx="163.800" cy="268" r="4"/><circle cx="147" cy="279" r="4.500"/><circle cx="158.500" cy="276.600" r="3.600"/><circle cx="155" cy="289" r="4.500"/></g>
<g fill="#c040d0"><circle cx="150.700" cy="266" r="3.200"/><circle cx="163.800" cy="268" r="2.600"/><circle cx="147" cy="279" r="3.200"/><circle cx="155" cy="289" r="3.200"/><circle cx="152.500" cy="301" r="1.800"/><circle cx="146.500" cy="292" r="1.500"/></g>
<circle cx="158.500" cy="276.600" r="2.200" fill="#b682e6"/>
<!-- purple flower bottom-left -->
<ellipse cx="155" cy="322" rx="5.500" ry="4" fill="#b98ae6" transform="rotate(-30 155 322)"/>
<ellipse cx="170.500" cy="329" rx="4.500" ry="5.500" fill="#e2c2f0"/>
<ellipse cx="161" cy="318" rx="5" ry="3.500" fill="#c8a0ec" transform="rotate(40 161 318)"/>
<ellipse cx="168" cy="311.500" rx="4" ry="3" fill="#c23cc6"/>
<ellipse cx="173" cy="318" rx="4" ry="3" fill="#a25ad8"/>
<path d="M166 313L148 310M166 314L147 316M165 315L150 322M166 312L152 304" stroke="#5a3aa4" stroke-width="0.900" fill="none"/>
<circle cx="148" cy="310" r="1.100" fill="#2e2a80"/><circle cx="147" cy="316" r="1.100" fill="#2e2a80"/><circle cx="150" cy="322" r="1.100" fill="#2e2a80"/>
<!-- small light blue flowers -->
<circle cx="186.600" cy="326.700" r="5.500" fill="#a2e0f2"/><circle cx="183" cy="323" r="3" fill="#8ad4ee"/><circle cx="190.500" cy="324" r="3" fill="#bdeaf6"/><circle cx="187" cy="327" r="1.300" fill="#1f5a78"/>
<ellipse cx="148" cy="332" rx="3" ry="4.500" fill="#9adcf0"/>
<!-- green leaf mid -->
<path d="M199 323C201 321 204 320.500 206.500 321C211 325 215 330 218 336L221.500 343L219.500 350.500L215 344L212.500 345.500L208 339L205 341L200 333C198.500 330 198.500 326 199 323Z" fill="#3c8427"/>
<path d="M201 323C206 330 213 340 219 349" stroke="#1f5a17" stroke-width="1.100" fill="none"/>
<path d="M199 323C201 321 204 320.500 206.500 321C209 323.500 211 326 213 329L204 327Z" fill="#2c6c1d"/>
<!-- dark blue petal -->
<path d="M204.500 381C203 376 206 373 211 374.500C218 377 223.500 384 225.500 392C226 396 223 398.500 219 398C211 396 206 389 204.500 381Z" fill="#1c479c"/>
<path d="M208 380C210 386 214 392 220 395" stroke="#2e6ad0" stroke-width="2" fill="none"/>
<path d="M207 377C209 376 212 377 214 379" stroke="#4d3a9a" stroke-width="1.500" fill="none"/>
<!-- small blue leaf -->
<path d="M172 402.500C175 396.500 181 392.500 188.500 392C190.500 394.500 191.500 398 192 401.500C185.500 400.500 178.500 401 172 402.500Z" fill="#2a74d0"/>
<!-- bottom-left bud -->
<ellipse cx="137" cy="404.500" rx="4" ry="5" fill="#2b7fca" transform="rotate(-15 137 404.500)"/><circle cx="135.500" cy="406.500" r="1.600" fill="#174a8a"/>
<!-- blue teardrop leaf -->
<path d="M246 393C246.500 385 247.500 376 250 366C252.500 356 257 349.500 262.500 348C267.500 349 269.500 354 268.500 360C267 370 259 380 251 387.500Z" fill="#2a6fd8"/>
<path d="M247.500 390C252 380 258 366 261.500 352" stroke="#1a4fae" stroke-width="1.300" fill="none"/>
<path d="M262 350C265 354 265 360 263 366" stroke="#5a9cec" stroke-width="1.600" fill="none"/>
<!-- small dark bud -->
<circle cx="235" cy="377.500" r="2.300" fill="#13294f"/><path d="M235.500 379C236 384 236.500 388 237.500 392" stroke="#6aaee0" stroke-width="1.800" fill="none"/>
<!-- big green leaf -->
<path d="M292.500 356.500L290 340C294 330 299 320 306 311L308.500 317.500C313 310 318 304 324 300L326 309.500C330 305 335 301.500 340 299L334 317.500L339 317C336 325 332 331 327.500 337L335 342C330 347 324 350 318 351.500C310 352.500 300 353 292.500 356.500Z" fill="#3d8a24"/>
<path d="M292.500 356C302 342 318 320 330 306" stroke="#1d5614" stroke-width="1.400" fill="none"/>
<path d="M292.500 356.500L290 340C294 330 299 320 306 311L308.500 317.500L298 340Z" fill="#2e741c"/>
<path d="M300 349C310 346 322 343 333 342" stroke="#2a6a1a" stroke-width="1.200" fill="none"/>
<path d="M312 328C318 322 324 316 332 312" stroke="#56a436" stroke-width="1.600" fill="none"/>
<!-- cyan flower top-right -->
<ellipse cx="306.500" cy="216" rx="11" ry="13" fill="#6dd3ea" transform="rotate(-35 306.500 216)"/>
<ellipse cx="300.500" cy="214" rx="4" ry="9" fill="#4cbfe2" transform="rotate(-10 300.500 214)"/>
<ellipse cx="324.600" cy="193" rx="6" ry="7.500" fill="#74d6ec" transform="rotate(-15 324.600 193)"/>
<ellipse cx="342.500" cy="194" rx="4.500" ry="8" fill="#9ae2f2" transform="rotate(20 342.500 194)"/>
<path d="M325 224C329 221 336 222 338 226C338 234 335 243 330 248C326 249 322 246 322 242C322 236 323 230 325 224Z" fill="#5fd0ea"/>
<path d="M333 218L312 202.500M333.500 217.500L318 200M334 217L326 198.500M335 217L334 198M336 217.500L340 205M333 219L316 210" stroke="#4a2a56" stroke-width="1.200" fill="none"/>
<g fill="#3a1f4a"><circle cx="312" cy="202.500" r="1.300"/><circle cx="318" cy="200" r="1.300"/><circle cx="326" cy="198.500" r="1.300"/><circle cx="334" cy="198" r="1.300"/><circle cx="340" cy="205" r="1.300"/><circle cx="316" cy="210" r="1.200"/><circle cx="343" cy="210" r="1.200"/></g>
<path d="M331 217L338 216L340 224L334 226Z" fill="#c8341f"/>
<path d="M330 219L334 217L335 225L331 224Z" fill="#4a9a3a"/>
<path d="M337 217L340 217L341 224L338 224Z" fill="#f0e8e0"/>
<!-- blue-purple small flower -->
<circle cx="278" cy="280.500" r="5.500" fill="#6f9fe8"/><circle cx="275" cy="278" r="3" fill="#9cc0f2"/><circle cx="280" cy="284" r="3" fill="#8a7ae0"/>
<g fill="#3a1fa0"><circle cx="284.500" cy="278" r="1.300"/><circle cx="285.500" cy="281.500" r="1.300"/><circle cx="284.500" cy="285" r="1.300"/></g>
<path d="M249 275C256 279 264 282 272 283" stroke="#3a6aa8" stroke-width="1.100" fill="none"/>
<path d="M251 283C254 281 258 284 258.500 289C258 293 255 295 253 293C250.500 290 250 286 251 283Z" fill="#2a6cae"/>
</g>
</g>
<!-- red arrow -->
<path d="M344.200 408.200L357.100 415.100L353.600 417.200L379.600 465.500L349.600 421L346.300 423.700Z" fill="#e6343c" filter="url(#sf)"/>
</svg>

</div>
<div id="dark" class="abs"></div>
<svg style="left:452px;top:383px" width="132" height="114" viewBox="452 383 132 114"><path d="M462 497L468 488L472 470L476 464.500L480 471L486 475L500 478L512 488L520 493L540 494L544 488L547.500 480.500L551 487L556 492L562 497Z" fill="#474747"/><path d="M474 476L476 478L478 476M545.500 488L547.500 490L549.500 488" stroke="#5e5e5e" stroke-width="0.800" fill="none"/><path d="M525.500 383V494" stroke="#3c7cba" stroke-width="1"/></svg>

<div id="status" class="abs">
<div class="abs" style="left:0;top:14px;width:563px;height:5px;background:#454545"></div>
<div class="abs" style="left:0;top:0;width:40px;height:14px;background:#494949"></div>
<span class="t" style="left:8px;font-size:9.4px;top:1.500px">100%</span>
<span class="t" style="left:70px;font-size:9.4px;top:0.500px"><span style="font-size:10px">文档</span>:732.4K/3.08M</span>
<svg style="left:183px;top:4px" width="4" height="7" viewBox="0 0 4 7"><path d="M0.500 0.500L3.500 3.500L0.500 6.500" stroke="#ddd" stroke-width="1" fill="none"/></svg>
<svg style="left:199px;top:4px" width="4" height="7" viewBox="0 0 4 7"><path d="M3.500 0.500L0.500 3.500L3.500 6.500" stroke="#9a9a9a" stroke-width="1" fill="none"/></svg>
<div class="abs" style="left:206px;top:0;width:340px;height:14px;background:#484848"></div>
<div class="abs" style="left:320px;top:2px;width:133px;height:10px;background:#606060"></div>
<svg style="left:534px;top:5px" width="4" height="7" viewBox="0 0 4 7"><path d="M0.500 0.500L3.500 3.500L0.500 6.500" stroke="#8a8a8a" stroke-width="1" fill="none"/></svg>

</div>
<div class="abs" style="left:0;top:511px;width:600px;height:5px;background:#414141"></div>
<div id="dock" class="abs">
<div class="abs" style="left:12.5px;top:0;width:4.5px;height:414px;background:#3c3c3c"></div>
<div class="abs" style="left:5px;top:14px;width:6px;height:267px;background:#5e5e5e"></div>
<svg style="left:3px;top:6px" width="8" height="5" viewBox="0 0 8 5"><path d="M0.500 4.500L4 1L7.500 4.500" stroke="#777" stroke-width="1" fill="none"/></svg>
<svg style="left:3px;top:405px" width="8" height="5" viewBox="0 0 8 5"><path d="M0.500 0.500L4 4L7.500 0.500" stroke="#777" stroke-width="1" fill="none"/></svg>
</div>
<div id="panel" class="abs">
<div class="abs" style="left:0;top:0;width:200px;height:13px;background:#3e3e3e"></div>
<svg style="left:174.0px;top:3.5px" width="8" height="5" viewBox="0 0 8 5"><path d="M3 0L0.3 2.5L3 5ZM7.4 0L4.7 2.5L7.4 5Z" fill="#d8d8d8"/></svg>
<svg style="left:189.5px;top:2.5px" width="7" height="7" viewBox="0 0 7 7"><path d="M0.7 0.7L6.3 6.3M6.3 0.7L0.7 6.3" stroke="#e4e4e4" stroke-width="1.5"/></svg>
<div class="abs" style="left:0;top:13px;width:200px;height:21px;background:#3e3e3e"></div>
<div class="abs" style="left:0;top:13px;width:33px;height:21px;background:#4e4e4e"></div>
<span class="t" style="left:6.5px;top:14.5px;font-size:10.3px;font-weight:500">图层</span>
<svg style="left:186.5px;top:18.0px" width="9" height="7" viewBox="0 0 9 7"><path d="M0 0.7H9M0 3.5H9M0 6.3H9" stroke="#bdbdbd" stroke-width="1.1"/></svg>
<div class="dd" style="left:5.0px;top:41.0px;width:68px;height:18px"></div>
<svg style="left:6.5px;top:45.5px" width="9" height="9" viewBox="0 0 9 9"><circle cx="3.6" cy="3.6" r="2.7" stroke="#e6e6e6" stroke-width="1.3" fill="none"/><path d="M5.6 5.6L8.4 8.4" stroke="#e6e6e6" stroke-width="1.5"/></svg>
<span class="t" style="left:19.5px;top:42.5px;font-size:10.3px;font-weight:500">类型</span>
<svg style="left:63.5px;top:48.0px" width="7" height="5" viewBox="0 0 7 5"><path d="M0.5 0.8L3.5 3.8L6.5 0.8" stroke="#c8c8c8" stroke-width="1.2" fill="none"/></svg>
<svg style="left:86.0px;top:45.0px" width="11" height="9" viewBox="0 0 11 9"><rect x="0.6" y="0.6" width="9.8" height="7.8" stroke="#e2e2e2" stroke-width="1.2" fill="none"/><path d="M1.5 7.5L4 4.2L5.8 6.2L7.2 5L9.5 7.5Z" fill="#e2e2e2"/><circle cx="7.6" cy="2.8" r="0.9" fill="#e2e2e2"/></svg>
<svg style="left:107.0px;top:44.5px" width="10" height="10" viewBox="0 0 10 10"><circle cx="5" cy="5" r="4.3" stroke="#e2e2e2" stroke-width="1.3" fill="none"/><path d="M5 5L8.2 1.8A4.5 4.5 0 1 0 9.5 5Z" fill="#e2e2e2"/></svg>
<div class="abs" style="left:126.5px;top:41.5px;width:11px;height:15px;font-family:'Liberation Serif',serif;font-weight:bold;font-size:13px;line-height:15px;text-align:center;color:#e2e2e2">T</div>
<svg style="left:146.5px;top:44.0px" width="11" height="11" viewBox="0 0 11 11"><rect x="1.5" y="1.5" width="8" height="8" stroke="#e2e2e2" stroke-width="1.1" fill="none"/><rect x="0" y="0" width="3" height="3" fill="#e2e2e2"/><rect x="8" y="0" width="3" height="3" fill="#e2e2e2"/><rect x="0" y="8" width="3" height="3" fill="#e2e2e2"/><rect x="8" y="8" width="3" height="3" fill="#e2e2e2"/></svg>
<svg style="left:167.5px;top:44.0px" width="9" height="11" viewBox="0 0 9 11"><path d="M0.6 0.6H5.6L8.4 3.4V10.4H0.6Z" stroke="#e2e2e2" stroke-width="1.2" fill="none"/><path d="M5.4 0.6V3.6H8.4" stroke="#e2e2e2" stroke-width="1" fill="none"/><rect x="2.6" y="5.4" width="4.2" height="4.6" fill="#e2e2e2"/></svg>
<div class="abs" style="left:190.0px;top:43.5px;width:7px;height:15px;border-radius:3.5px;background:#3a3a3a"></div>
<div class="abs" style="left:189.7px;top:42.7px;width:7.6px;height:7.6px;border-radius:50%;background:#d6d6d6"></div>
<div class="abs" style="left:0;top:62.5px;width:200px;height:1px;background:#454545"></div>
<div class="dd" style="left:5.0px;top:65.5px;width:93.5px;height:17px"></div>
<span class="t" style="left:8.7px;top:66.5px;font-size:10.3px">正常</span>
<svg style="left:88.5px;top:72.0px" width="7" height="5" viewBox="0 0 7 5"><path d="M0.5 0.8L3.5 3.8L6.5 0.8" stroke="#c8c8c8" stroke-width="1.2" fill="none"/></svg>
<span class="t" style="left:104.5px;top:66.5px;font-size:10.4px">不透明度:</span>
<div class="dd" style="left:152.0px;top:65.5px;width:32px;height:17px"></div>
<span class="t" style="left:155.0px;top:68.3px;font-size:9.5px">100%</span>
<div class="dd" style="left:184.5px;top:65.5px;width:12px;height:17px"></div>
<svg style="left:187.0px;top:72.0px" width="7" height="5" viewBox="0 0 7 5"><path d="M0.5 0.8L3.5 3.8L6.5 0.8" stroke="#c8c8c8" stroke-width="1.2" fill="none"/></svg>
<span class="t" style="left:4.0px;top:90.0px;font-size:10px">锁定:</span>
<svg style="left:35.0px;top:92.3px" width="10" height="10" viewBox="0 0 10 10"><rect x="0.5" y="0.5" width="9" height="9" stroke="#bdbdbd" stroke-width="1" fill="none"/><rect x="1" y="1" width="4" height="4" fill="#9a9a9a"/><rect x="5" y="5" width="4" height="4" fill="#9a9a9a"/></svg>
<svg style="left:53.5px;top:91.8px" width="10" height="11" viewBox="0 0 10 11"><path d="M9.4 0.3C8.8 -0.1 8.2 0.2 7.8 0.8L3.8 6.2L5.2 7.4L9.4 1.8C9.8 1.2 9.8 0.7 9.4 0.3Z" fill="#e2e2e2"/><path d="M3.2 6.8C1.8 7 1.8 8.8 0.2 9.8C2.4 10.8 4.8 9.8 4.6 8Z" fill="#e2e2e2"/></svg>
<svg style="left:71.0px;top:91.8px" width="11" height="11" viewBox="0 0 14 14"><path d="M7 0L4.6 2.8H6.3V6.3H2.8V4.6L0 7L2.8 9.4V7.7H6.3V11.2H4.6L7 14L9.4 11.2H7.7V7.7H11.2V9.4L14 7L11.2 4.6V6.3H7.7V2.8H9.4Z" fill="#e2e2e2"/></svg>
<svg style="left:89.5px;top:91.8px" width="11" height="11" viewBox="0 0 11 11"><path d="M2.4 0V8.6H11M0 2.4H8.6V11" stroke="#e2e2e2" stroke-width="1.2" fill="none"/><path d="M7 0.5L10.5 4" stroke="#e2e2e2" stroke-width="1"/></svg>
<svg style="left:107.5px;top:91.3px" width="9" height="11" viewBox="0 0 9 11"><path d="M2.2 5V3.2C2.2 0.4 6.8 0.4 6.8 3.2V5" stroke="#e2e2e2" stroke-width="1.3" fill="none"/><rect x="0.3" y="4.6" width="8.4" height="6.2" rx="0.8" fill="#e2e2e2"/></svg>
<span class="t" style="left:124.0px;top:90.0px;font-size:10px">填充:</span>
<div class="dd" style="left:152.0px;top:89.5px;width:32px;height:16px"></div>
<span class="t" style="left:155.0px;top:91.8px;font-size:9.5px">100%</span>
<div class="dd" style="left:184.5px;top:89.5px;width:12px;height:16px"></div>
<svg style="left:187.0px;top:95.5px" width="7" height="5" viewBox="0 0 7 5"><path d="M0.5 0.8L3.5 3.8L6.5 0.8" stroke="#c8c8c8" stroke-width="1.2" fill="none"/></svg>
<div class="abs" style="left:0;top:100.0px;width:82px;height:1px;background:#c63a8e"></div>
<div class="abs" style="left:0;top:105.0px;width:200px;height:1px;background:#444"></div>
<div class="abs" style="left:24.0px;top:107.0px;width:168px;height:43px;background:#656565"></div>
<div class="abs" style="left:23.5px;top:106.0px;width:1px;height:106px;background:#474747"></div>
<div class="abs" style="left:1.0px;top:150.0px;width:193px;height:1px;background:#474747"></div>
<div class="abs" style="left:1.0px;top:178.5px;width:193px;height:1px;background:#474747"></div>
<div class="abs" style="left:1.0px;top:211.5px;width:193px;height:1px;background:#474747"></div>
<svg style="left:7.05px;top:125.50px" width="10.5" height="7" viewBox="0 0 12 8"><path d="M0 4C2.2 0.6 4.2 0 6 0C7.8 0 9.8 0.6 12 4C9.8 7.4 7.8 8 6 8C4.2 8 2.2 7.4 0 4Z" fill="#ececec"/><circle cx="6" cy="4" r="2.3" fill="#4a4a4a"/><circle cx="6" cy="4" r="1" fill="#ececec"/></svg>
<svg style="left:7.05px;top:159.00px" width="10.5" height="7" viewBox="0 0 12 8"><path d="M0 4C2.2 0.6 4.2 0 6 0C7.8 0 9.8 0.6 12 4C9.8 7.4 7.8 8 6 8C4.2 8 2.2 7.4 0 4Z" fill="#ececec"/><circle cx="6" cy="4" r="2.3" fill="#4a4a4a"/><circle cx="6" cy="4" r="1" fill="#ececec"/></svg>
<svg style="left:7.05px;top:192.50px" width="10.5" height="7" viewBox="0 0 12 8"><path d="M0 4C2.2 0.6 4.2 0 6 0C7.8 0 9.8 0.6 12 4C9.8 7.4 7.8 8 6 8C4.2 8 2.2 7.4 0 4Z" fill="#ececec"/><circle cx="6" cy="4" r="2.3" fill="#4a4a4a"/><circle cx="6" cy="4" r="1" fill="#ececec"/></svg>
<svg style="left:32.5px;top:122.5px" width="5" height="7" viewBox="0 0 5 7"><path d="M4.2 0.5H2.4V5M0.6 3.6L2.4 5.8L4.2 3.6" stroke="#d8d8d8" stroke-width="1" fill="none"/></svg>
<svg style="left:39.3px;top:113.5px;overflow:hidden" width="31" height="30" viewBox="0 0 31 30"><rect width="31" height="30" fill="#fff"/><svg x="2" y="2" width="27" height="26" viewBox="135 185 450 450" preserveAspectRatio="none" style="overflow:hidden;position:static"><rect x="135" y="185" width="450" height="450" fill="#eef4fb"/><g filter="url(#sf2)"><use href="#floral"/><use href="#floral" transform="translate(225 0)"/><use href="#floral" transform="translate(0 225)"/><use href="#floral" transform="translate(225 225)"/><use href="#floral" transform="translate(110 110)"/><use href="#floral" transform="translate(-110 110)"/><use href="#floral" transform="translate(110 -110)"/><use href="#floral" transform="translate(330 110)"/><use href="#floral" transform="translate(110 330)"/></g></svg><rect x="1.500" y="1.500" width="28" height="27" fill="none" stroke="#1e2a44" stroke-width="1"/><path d="M0 0H6V3H3V6H0ZM31 0H25V3H28V6H31ZM0 30H6V27H3V24H0ZM31 30H25V27H28V24H31Z" fill="#fff"/><rect x="17.500" y="16" width="12" height="12.500" fill="#e4e4e4"/><path d="M20 18.500H25L27.500 21V26.500H20Z" fill="none" stroke="#444" stroke-width="1.100"/><rect x="21.500" y="22" width="3.500" height="3" fill="#444"/></svg>
<span class="t" style="left:74.5px;top:122.3px;font-size:9.5px;color:#dcdcdc">001</span>
<svg style="left:28.0px;top:151.0px" width="26" height="24" viewBox="0 0 26 24"><defs><pattern id="ck" width="6" height="6" patternUnits="userSpaceOnUse"><rect width="6" height="6" fill="#fff"/><rect width="3" height="3" fill="#d4d4d4"/><rect x="3" y="3" width="3" height="3" fill="#d4d4d4"/></pattern><filter id="b1"><feGaussianBlur stdDeviation="1.2"/></filter></defs><rect width="26" height="24" fill="url(#ck)"/><path d="M4 4C9 5.5 17 5.5 22 4C21 9 21 15 22 20C17 18.8 9 18.800 4 20C5 15 5 9 4 4Z" fill="#f2f2f2"/><path d="M6 9C8 17 16 19 21 12C20 18 10 20 6 17Z" fill="#c4c4c4" filter="url(#b1)"/></svg>
<span class="t" style="left:61.5px;top:155.5px;font-size:10.3px;text-decoration:underline;text-underline-offset:2px">图层 1</span>
<svg style="left:28.0px;top:183.0px" width="26" height="24" viewBox="0 0 26 24"><rect width="26" height="24" fill="#f4f4f4"/><rect x="4.500" y="4.500" width="17" height="15" fill="#e9e9e9"/><path d="M5 5C9 6.200 17 6.200 21 5C20.200 9 20.200 15 21 19C17 18 9 18 5 19C5.800 15 5.800 9 5 5Z" fill="#f6f6f6"/><path d="M6 9C8 17 16 19 21 11C20 18 10 20 6 17Z" fill="#c0c0c0" filter="url(#b1)"/></svg>
<span class="t" style="left:61.5px;top:189.0px;font-size:10.3px">背景</span>
<svg style="left:165.0px;top:190.5px" width="9" height="11" viewBox="0 0 9 11"><path d="M2.4 5V3.2C2.4 0.8 6.6 0.8 6.6 3.2V5" stroke="#e2e2e2" stroke-width="1.1" fill="none"/><rect x="0.8" y="4.9" width="7.4" height="5.4" stroke="#e2e2e2" stroke-width="1.1" fill="none"/><rect x="4" y="6.6" width="1" height="2" fill="#e2e2e2"/></svg>
<div class="abs" style="left:4.3px;top:105.6px;width:188.2px;height:45px;border:3px solid #cd2d34"></div>
<div class="abs" style="left:0;top:277.5px;width:200px;height:1px;background:#464646"></div>
<div class="abs" style="left:0;top:299px;width:200px;height:1px;background:#3f3f3f"></div><div class="abs" style="left:0;top:300px;width:200px;height:4px;background:#4e4e4e"></div>
<svg style="left:33.0px;top:285.0px" width="12" height="5" viewBox="0 0 12 5"><rect x="0.6" y="0.6" width="5.4" height="3.8" rx="1.9" stroke="#8a8a8a" stroke-width="1.1" fill="none"/><rect x="6" y="0.6" width="5.4" height="3.8" rx="1.9" stroke="#8a8a8a" stroke-width="1.1" fill="none"/></svg>
<span class="t" style="left:55.0px;top:279.0px;font-size:12px;font-style:italic;font-family:'Liberation Serif',serif;color:#eee">fx</span>
<div class="abs" style="left:66.0px;top:291.0px;width:1.6px;height:1.6px;background:#ddd"></div>
<svg style="left:77.5px;top:282.5px" width="12" height="9" viewBox="0 0 12 9"><rect width="12" height="9" rx="0.8" fill="#e2e2e2"/><circle cx="6" cy="4.5" r="2.6" fill="#4e4e4e"/></svg>
<svg style="left:101.0px;top:282.5px" width="10" height="10" viewBox="0 0 10 10"><circle cx="5" cy="5" r="4.2" stroke="#e2e2e2" stroke-width="1.3" fill="none"/><path d="M8 2A4.3 4.3 0 0 1 2 8Z" fill="#e2e2e2"/></svg>
<div class="abs" style="left:111.0px;top:291.5px;width:1.6px;height:1.6px;background:#ddd"></div>
<svg style="left:122.0px;top:282.0px" width="12" height="10" viewBox="0 0 12 10"><path d="M0 0H4.6L5.8 1.6H12V10H0Z" fill="#e2e2e2"/><path d="M0 3H12" stroke="#4e4e4e" stroke-width="0.9"/></svg>
<svg style="left:145.5px;top:282.5px" width="10" height="10" viewBox="0 0 10 10"><path d="M0.6 0.6H9.4V6.4L6.4 9.4H0.6Z" stroke="#e2e2e2" stroke-width="1.2" fill="none"/><path d="M9.4 6.2H6.2V9.4Z" fill="#e2e2e2"/></svg>
<svg style="left:167.0px;top:281.5px" width="9" height="12" viewBox="0 0 9 12"><path d="M0 2.2H9M3 2V0.6H6V2" stroke="#e2e2e2" stroke-width="1.1" fill="none"/><path d="M1 3.4L1.5 11.4H7.5L8 3.4" stroke="#e2e2e2" stroke-width="1.1" fill="none"/><path d="M3.2 4.5V10M4.5 4.5V10M5.8 4.5V10" stroke="#e2e2e2" stroke-width="0.8"/></svg>

</div>
</body></html>
